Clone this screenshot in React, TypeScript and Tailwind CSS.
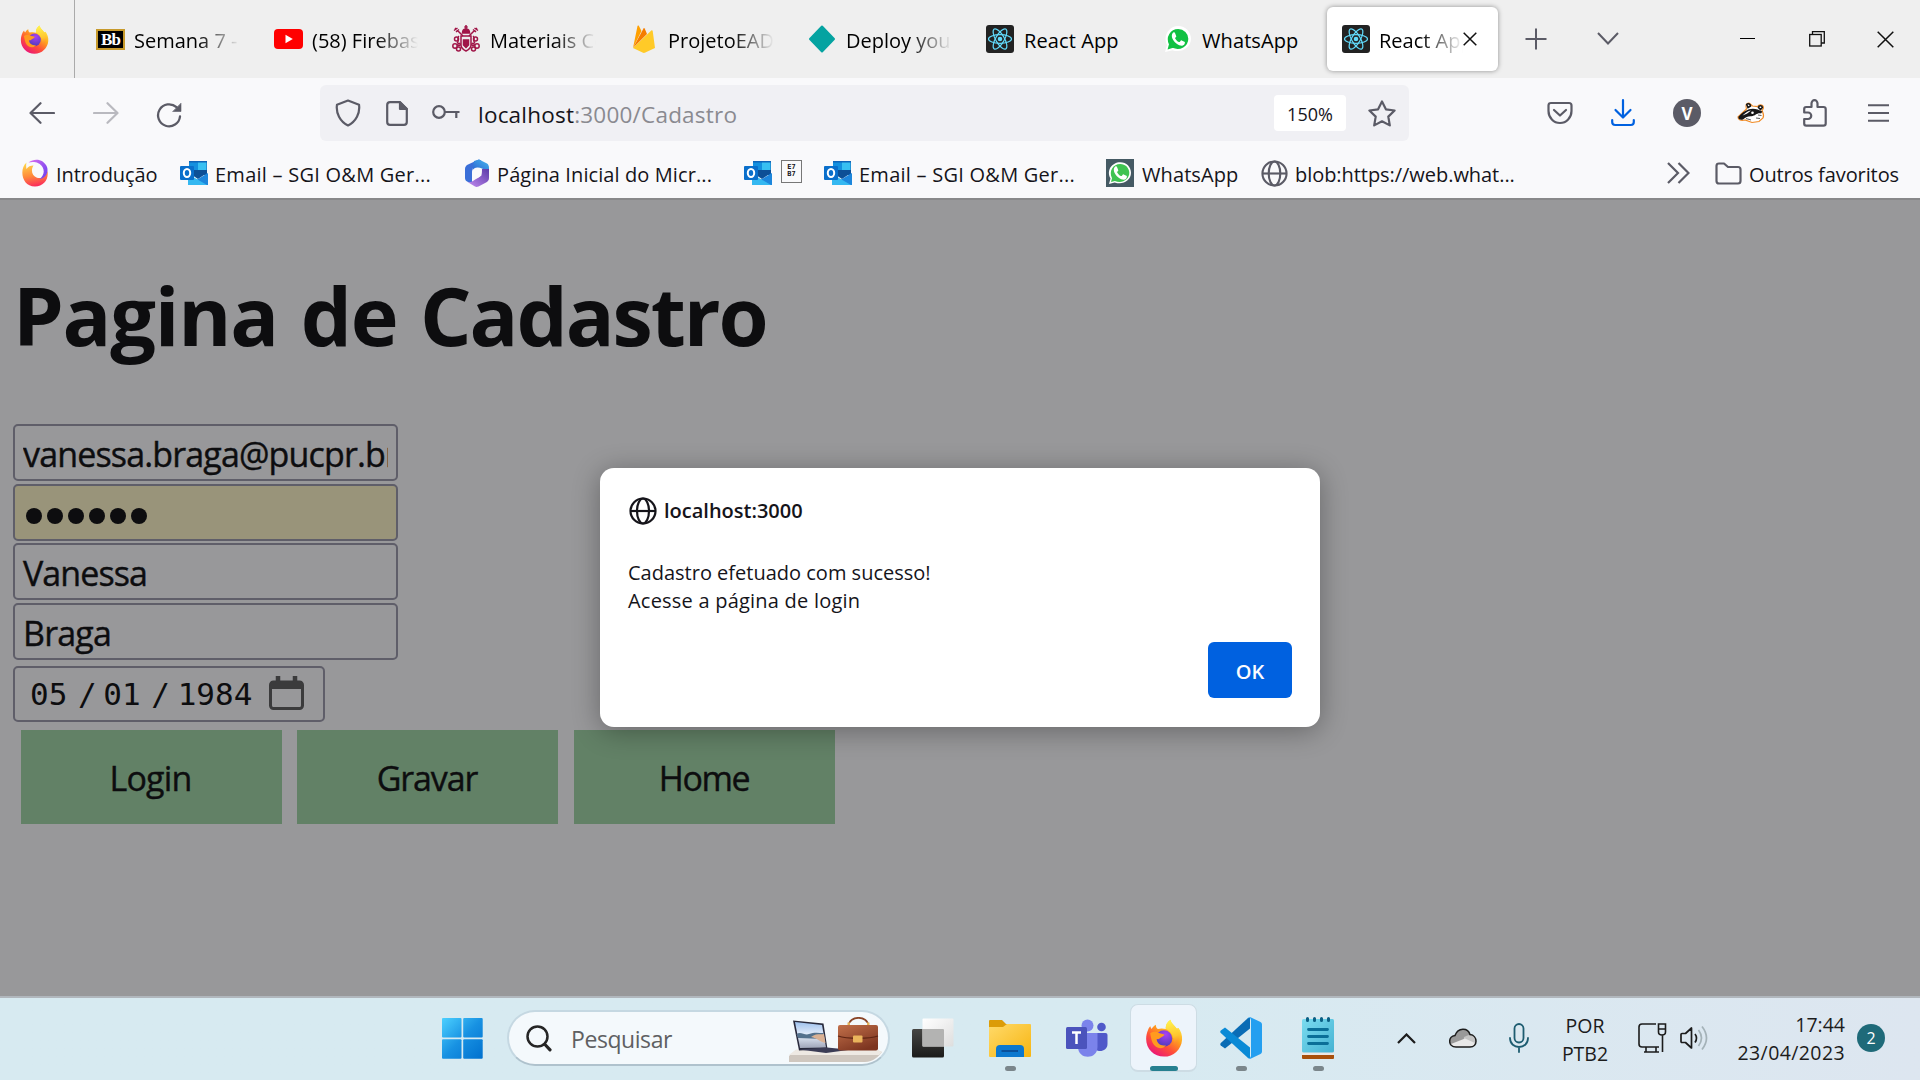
import React from "react";

type IconProps = { className?: string };

function FirefoxIcon({ className }: IconProps) {
  return (
    <svg viewBox="0 0 40 40" className={className}>
      <defs>
        <linearGradient id="fxBody" x1="0.85" y1="0.1" x2="0.25" y2="1">
          <stop offset="0" stopColor="#fff14a" />
          <stop offset="0.35" stopColor="#ffa21c" />
          <stop offset="0.65" stopColor="#ff4f38" />
          <stop offset="1" stopColor="#e9127c" />
        </linearGradient>
        <radialGradient id="fxGlobe" cx="0.6" cy="0.25" r="0.8">
          <stop offset="0" stopColor="#a940f5" />
          <stop offset="1" stopColor="#4a3bb5" />
        </radialGradient>
        <linearGradient id="fxTail" x1="0.5" y1="0" x2="0.6" y2="1">
          <stop offset="0" stopColor="#fff44f" />
          <stop offset="0.6" stopColor="#ffc52e" />
          <stop offset="1" stopColor="#ff6a2e" stopOpacity="0.2" />
        </linearGradient>
      </defs>
      <path
        fill="url(#fxBody)"
        d="M3.2 11.5 C4 9 5 8.3 5.600 7.500 C5.800 8.800 6.400 9.700 7 10.400 C8.300 8.300 9.500 7 11.500 6 C11.300 8 12 9.600 13.500 10.500 C17 9.500 20 10 22 10.600 C21.500 6.600 23.500 3 26.800 0.700 C27.500 4.500 31 6.500 33.500 10 C34.600 9.800 35 9.600 35.200 9.300 C37.800 13 39.400 17 39 22 C38.200 32 30 39.600 20 39.600 C9.500 39.600 1.200 31.500 1.200 21 C1.200 17.500 2 14 3.200 11.500 Z"
      />
      <path fill="url(#fxTail)" d="M26.800 0.700 C27.500 4.500 31 6.500 33.500 10.500 C38 18 35 26 30 30 C31.500 21 29 14 22 10.600 C21.500 6.600 23.500 3 26.800 .7 Z" />
      <circle cx="20" cy="20.500" r="8.700" fill="url(#fxGlobe)" />
      <path fill="#ff9a1f" d="M5.500 15 C9 12.800 12.500 13.300 14.500 14.800 C16.500 15.600 18.500 15.800 20.500 16.200 C20 18.300 16.500 18.700 15 20.800 C14.500 21.500 13 21.300 12.300 21.100 C12.700 26 17 28.800 22 27.500 C19 32.500 11 31.500 8 25 C6.500 21.500 6 18 5.500 15 Z" />
    </svg>
  );
}

function BlackboardIcon() {
  return (
    <span className="flex h-[21px] w-[29px] items-center justify-center border-2 border-[#c79a2c] bg-black font-['Liberation_Serif',serif] text-[17px] leading-none font-bold tracking-[-1px] text-white">
      Bb
    </span>
  );
}

function YoutubeIcon() {
  return (
    <svg viewBox="0 0 29 20" className="h-5 w-[29px]">
      <rect width="29" height="20" rx="4" fill="#f00" />
      <path d="M11.500 5.700 L18.800 10 L11.500 14.300 Z" fill="#fff" />
    </svg>
  );
}

function CrestIcon() {
  return (
    <svg viewBox="0 0 28 28" className="size-7" fill="none" stroke="#a01648" strokeWidth="1.500">
      <path d="M14 0 V4 M12.300 2 H15.700" />
      <path d="M10.500 8 C10.500 4.500 12 4 14 4 C16 4 17.500 4.500 17.500 8 Z" fill="#a01648" />
      <path d="M3 3 L11 11 M25 3 L17 11 M2 5.500 L5.500 3 M26 5.500 L22.500 3 M4 7 L7 4.500 M24 7 L21 4.500" />
      <path d="M9 11 H19 V20 C19 23.500 16 25 14 26 C12 25 9 23.500 9 20 Z" />
      <path d="M11.500 15 H16.500 V20 L14 22.500 L11.500 20 Z" fill="#a01648" />
      <circle cx="4.500" cy="14" r="2" />
      <circle cx="23.500" cy="14" r="2" />
      <path d="M7 11 C4 13 8 16 5 18 M21 11 C24 13 20 16 23 18" />
      <circle cx="3" cy="21" r="2.200" />
      <circle cx="6.500" cy="24" r="2" />
      <circle cx="25" cy="21" r="2.200" />
      <circle cx="21.500" cy="24" r="2" />
      <circle cx="7" cy="19.500" r="1.200" />
      <circle cx="21" cy="19.500" r="1.200" />
    </svg>
  );
}

function FirebaseIcon() {
  return (
    <svg viewBox="0 0 22 28" className="ml-[3px] h-7 w-[22px]">
      <path d="M0 23 L4.500 1 C4.600 .3 5.400 .2 5.800 .8 L8.500 6 Z" fill="#ffa000" />
      <path d="M0 23 L10.500 3.500 C10.800 3 11.400 3 11.700 3.500 L14 9 Z" fill="#f57c00" />
      <path d="M0 23 L18.300 5.600 C18.800 5.100 19.600 5.300 19.700 6 L22 23 L12.300 27.600 C11.400 28.100 10.400 28.100 9.500 27.600 Z" fill="#ffca28" />
    </svg>
  );
}

function DeployIcon() {
  return (
    <svg viewBox="0 0 28 28" className="size-7">
      <path d="M14 1.500 L26 14 L14 26.500 L2 14 Z" fill="#05a3a1" stroke="#05a3a1" strokeWidth="2" strokeLinejoin="round" />
    </svg>
  );
}

function ReactIcon() {
  return (
    <svg viewBox="0 0 28 28" className="size-7">
      <rect width="28" height="28" rx="3" fill="#222" />
      <g fill="none" stroke="#61dafb" strokeWidth="1.200">
        <ellipse cx="14" cy="14" rx="11.500" ry="4.300" />
        <ellipse cx="14" cy="14" rx="11.500" ry="4.300" transform="rotate(60 14 14)" />
        <ellipse cx="14" cy="14" rx="11.500" ry="4.300" transform="rotate(120 14 14)" />
      </g>
      <circle cx="14" cy="14" r="2.300" fill="#61dafb" />
    </svg>
  );
}

const HANDSET =
  "M9.800 7.200 C9.200 7.200 7.800 8.600 7.800 11 C7.800 13.800 10 16.500 12.400 18.500 C14.500 20.200 16.700 20.900 18.200 20.700 C19.700 20.400 20.800 19 20.900 17.700 C20.900 17.200 20.800 17 20.400 16.800 L17.600 15.400 C17.200 15.200 17 15.300 16.700 15.700 L15.700 16.900 C15.500 17.100 15.300 17.200 14.900 17 C13.200 16.200 12 14.900 11.200 13.400 C11 13.100 11.100 12.900 11.300 12.700 L12.200 11.700 C12.300 11.500 12.300 11.200 12.200 10.900 L11 7.900 C10.800 7.400 10.600 7.200 9.800 7.200 Z";

function WhatsIcon({ boxed }: { boxed?: boolean }) {
  return (
    <svg viewBox="0 0 28 28" className="size-7 shrink-0">
      {boxed && <rect width="28" height="28" fill="#455a64" />}
      <path
        d={boxed ? "M3 25 L4.500 19.500 C0 11.500 6 3.300 14.200 3.300 C20.500 3.300 25 8 25 13.800 C25 21.700 16.500 26.500 8.700 23.400 Z" : "M1 27 L3 20 C-1.500 11 5 1 14.200 1 C21.500 1 27 7 27 13.800 C27 22.500 17.500 28.500 8.500 25.200 Z"}
        fill="#fff"
      />
      <path d="M5 23 L6 19.300 C2.500 12 7.200 5 14.200 5 C19.400 5 23.300 9 23.300 13.800 C23.300 20.500 16 25 8.900 21.900 Z" fill={boxed ? "#3fc351" : "#12c143"} stroke={boxed ? "none" : "#12c143"} strokeWidth="2" />
      <path d={HANDSET} fill="#fff" />
    </svg>
  );
}

function OutlookIcon() {
  return (
    <svg viewBox="0 0 28 24" className="h-6 w-7 shrink-0">
      <rect x="9" width="18" height="14" fill="#0f64b8" />
      <rect x="9" y="1.500" width="9" height="8" fill="#1490df" />
      <rect x="18" y="1.500" width="8.500" height="8" fill="#38c0f2" />
      <path d="M9 9 H27 V12 L18 18 L9 12 Z" fill="#0d4f96" />
      <path d="M28 12 V24 H8 Z" fill="#1d86dc" />
      <path d="M8 13 L27 24 H8 Z" fill="#35b8f1" />
      <rect y="5" width="14" height="14" rx="1" fill="#0a6fcb" />
      <ellipse cx="7" cy="12" rx="3.200" ry="3.900" fill="none" stroke="#fff" strokeWidth="2" />
    </svg>
  );
}

function IntroIcon() {
  return (
    <svg viewBox="0 0 28 28" className="size-7 shrink-0">
      <defs>
        <linearGradient id="inA" x1="0.3" y1="0" x2="0.5" y2="1">
          <stop offset="0" stopColor="#ffd84a" />
          <stop offset="0.55" stopColor="#ff8a3a" />
          <stop offset="1" stopColor="#fb2a5c" />
        </linearGradient>
        <linearGradient id="inB" x1="0" y1="0" x2="1" y2="0.6">
          <stop offset="0" stopColor="#e070ee" />
          <stop offset="1" stopColor="#7a45f0" />
        </linearGradient>
      </defs>
      <path d="M5.500 3.500 C-2 10 .5 27.500 14 27.500 C22.500 27.500 28 20.500 26.500 12 C25 17.500 20 20.500 15.500 18.500 C11 16.500 9.500 11 12.500 6.500 C9.500 6.500 7 7.500 5.500 10 C5 7.500 5 5.500 5.500 3.500 Z" fill="url(#inA)" />
      <path d="M7.500 3.500 C14 -1.500 23 .5 26 8 C28 14 24 19.500 18.500 20 C22.500 17 24 12.500 21.500 8 C18.500 3 12.500 2.300 7.500 3.500 Z" fill="url(#inB)" />
    </svg>
  );
}

function Ms365Icon() {
  return (
    <svg viewBox="0 0 26 28" className="h-7 w-[26px] shrink-0">
      <defs>
        <linearGradient id="msA" x1="0" y1="1" x2="1" y2="0">
          <stop offset="0" stopColor="#2b5fd0" />
          <stop offset="1" stopColor="#43b6ee" />
        </linearGradient>
        <linearGradient id="msB" x1="0" y1="1" x2="1" y2="0">
          <stop offset="0" stopColor="#c18af0" />
          <stop offset="1" stopColor="#5b3aa8" />
        </linearGradient>
      </defs>
      <path d="M15 .5 L4 5.500 C2 6.500 1 8 1 10 V19 C1 21 2 22 4 23 L8 24.500 V12 C8 9 10 8 13 8 L21 8 L17 1.500 Z" fill="#3a6fd8" />
      <path d="M10 2 L15 .5 L23 4.500 C24.500 5.500 25 7 25 9 V13 L18 9.500 C14 7.500 9 8 8 13 Z" fill="url(#msA)" />
      <path d="M25 10 V19 C25 21 24 22.500 22.500 23.300 L14.500 27.500 C13 28 12 28 11 27.500 L3.500 23 C8 24 10 21 13 19.500 C17 18 18 15 18 10 Z" fill="url(#msB)" />
      <path d="M13 9 L17.500 11.500 V16.500 L13 19 L8.500 16.500 V11.500 Z" fill="#f9f9fb" />
    </svg>
  );
}

function GlobeIcon({ className }: IconProps) {
  return (
    <svg viewBox="0 0 28 28" className={className} fill="none" stroke="currentColor" strokeWidth="2.200">
      <circle cx="14" cy="14" r="12.500" />
      <ellipse cx="14" cy="14" rx="6" ry="12.500" />
      <path d="M1.500 14 H26.500" />
    </svg>
  );
}

function BadgerIcon() {
  return (
    <svg viewBox="0 0 28 22" className="h-[22px] w-7">
      <path d="M1 15 L9.500 7 C8 3 9.500 .8 12.500 1.300 L15.500 4 L20.500 4.500 C22.500 1.800 27 3 26.300 6.500 L25 8.500 C26 11 27.500 13 26 16 L22 19.500 L15 20.500 L8 18 C4 19 1 18 1 15 Z" fill="#fff" stroke="#f08a24" strokeWidth="1.200" />
      <path d="M1.300 15 C4.500 11 8.500 8.500 12 7.300 C17 5.800 21 7.500 25.500 9.500 L24 11.500 C20 10.500 18.500 14 14.500 14.200 C11 14 9 15 6 17.500 C3.500 18.300 1.300 17.500 1.300 15 Z" fill="#161616" />
      <path d="M5.500 13.500 C9 10.500 11 9 14 8.500 C11.500 10.500 9 12.500 5.500 13.500 Z" fill="#fff" />
      <path d="M9.700 2.500 C11 1 13.500 2 13.500 4 L11 5.500 Z M21.500 5.500 C22 3 25.300 3.300 25.300 5.500 L23.500 7.500 Z" fill="none" stroke="#161616" strokeWidth="1.600" />
      <circle cx="15.500" cy="10.800" r="1.300" fill="#fff" />
      <path d="M9 16.500 L14 18 M21 13 L24.500 13.500 M19 16 L23 16.500" stroke="#444" strokeWidth="0.900" />
    </svg>
  );
}

function SearchArt() {
  return (
    <svg viewBox="0 0 94 46" className="h-[46px] w-[94px]">
      <defs>
        <linearGradient id="arBag" x1="0" y1="0" x2="0.6" y2="1">
          <stop offset="0" stopColor="#c2704a" />
          <stop offset="1" stopColor="#7d3520" />
        </linearGradient>
        <linearGradient id="arSky" x1="0" y1="0" x2="0" y2="1">
          <stop offset="0" stopColor="#9fc2ee" />
          <stop offset="0.500" stopColor="#e6eefa" />
          <stop offset="1" stopColor="#9fa5b8" />
        </linearGradient>
      </defs>
      <path d="M0 39 L7 33 H88 L93 35 C90 39 84 45 76 45 H0 Z" fill="#cfc7bf" />
      <path d="M0 38 L7 32.500 H88 L93 35 L90 38 Z" fill="#eee9e3" />
      <path d="M4 3.500 L34.500 6.500 L38.500 32 L10 33.500 Z" fill="#27283a" />
      <path d="M6 5 L33 8 L37 30.500 L11 31 Z" fill="url(#arSky)" />
      <path d="M7.500 17 C12 14 16 19 20 17 C25 15 30 16 34.500 16 L35.500 22 L9 21 Z" fill="#54718c" />
      <path d="M22 20 C27 16 32 18 35 17 L36.500 26 C31 25 28 21 22 20 Z" fill="#d9b194" />
      <path d="M10 32.500 L38 30.500 L61 32.800 L37 36 Z" fill="#3b3c55" />
      <path d="M60 8 C60 -1.500 79 -1.500 79 8" fill="none" stroke="#8a4528" strokeWidth="1.800" />
      <rect x="58.500" y="5.500" width="2.500" height="3.500" fill="#e5b35a" />
      <rect x="78" y="5.500" width="2.500" height="3.500" fill="#e5b35a" />
      <rect x="49" y="8" width="40" height="25.500" rx="2" fill="url(#arBag)" />
      <path d="M49 19 C58 22 80 22 89 19" fill="none" stroke="#5d2413" strokeWidth="1.300" />
      <rect x="64" y="18.500" width="9.500" height="7" rx="1" fill="#eab45c" />
    </svg>
  );
}

function TaskViewIcon() {
  return (
    <svg viewBox="0 0 42 40" className="h-10 w-[42px]">
      <defs>
        <linearGradient id="tvA" x1="0" y1="0" x2="0" y2="1">
          <stop offset="0" stopColor="#464644" />
          <stop offset="1" stopColor="#1b1b1a" />
        </linearGradient>
        <linearGradient id="tvB" x1="0" y1="0" x2="1" y2="1">
          <stop offset="0" stopColor="#fff" />
          <stop offset="1" stopColor="#dedede" />
        </linearGradient>
      </defs>
      <rect y="11" width="32" height="28.500" rx="1.500" fill="url(#tvA)" />
      <rect x="10.500" y="0.500" width="31" height="28" rx="1" fill="url(#tvB)" />
      <path d="M10.500 11 H31 Q32 11 32 12 V28.500 H10.500 Z" fill="#b3b3b2" />
    </svg>
  );
}

function ExplorerIcon() {
  return (
    <svg viewBox="0 0 42 37" className="h-[37px] w-[42px]">
      <defs>
        <linearGradient id="exA" x1="0" y1="0" x2="1" y2="1">
          <stop offset="0" stopColor="#ffda6a" />
          <stop offset="1" stopColor="#f7b511" />
        </linearGradient>
      </defs>
      <path d="M0 1 Q0 0 1 0 H13 L17 4 H40 V9 H0 Z" fill="#dc9c08" />
      <path d="M0 7 H14 L18 4 H41 Q42 4 42 5 V36 Q42 37 41 37 H1 Q0 37 0 36 Z" fill="url(#exA)" />
      <path d="M7 37 V29 Q7 25 11 25 H31 Q35 25 35 29 V37 Z" fill="#0c78cf" />
      <path d="M12.500 31 H29" stroke="#0a4c96" strokeWidth="1.800" />
    </svg>
  );
}

function TeamsIcon() {
  return (
    <svg viewBox="0 0 42 38" className="h-[38px] w-[42px]">
      <circle cx="21.500" cy="6.500" r="6" fill="#7b83eb" />
      <circle cx="35.500" cy="8" r="4.300" fill="#5059c9" />
      <path d="M28 14 H39.500 Q41.500 14 41.500 16 V25 C41.500 34 28 34 28 27 Z" fill="#5059c9" />
      <path d="M12 14 H31.500 V28 C31.500 41 12 41 12 28 Z" fill="#7b83eb" />
      <rect y="8" width="21" height="22" rx="1.500" fill="#4b53bc" />
      <path d="M6 13.500 H15 M10.500 13.500 V25" stroke="#fff" strokeWidth="2.500" />
    </svg>
  );
}

function VscodeIcon() {
  return (
    <svg viewBox="0 0 42 42" className="size-[42px]">
      <path d="M30 1 V11.500 L5 31.500 L.8 28.500 Q-.3 27.300 .8 26 L28 1 Z" fill="#0a6cb5" />
      <path d="M30 41 V30.500 L5 10.500 L.8 13.500 Q-.3 14.700 .8 16 L28 41 Z" fill="#0a8ad6" />
      <path d="M30.500 .3 L40.500 5 Q42 5.800 42 7.500 V34.500 Q42 36.200 40.500 37 L30.500 41.700 Q28.500 42 27.500 40.500 Q31 42 31 38.500 V3.500 Q31 0 27.500 1.500 Q28.500 0 30.500 .3 Z" fill="#249ff0" />
    </svg>
  );
}

function NotepadIcon() {
  return (
    <svg viewBox="0 0 32 42" className="h-[42px] w-8">
      <defs>
        <linearGradient id="npA" x1="0" y1="0" x2="1" y2="1">
          <stop offset="0" stopColor="#7bdcf0" />
          <stop offset="1" stopColor="#45b2d2" />
        </linearGradient>
      </defs>
      <rect y="37" width="32" height="5" rx="1" fill="#a8500c" />
      <rect y="34" width="32" height="4" fill="#ece8e6" />
      <rect y="2" width="32" height="33.500" rx="1.500" fill="url(#npA)" />
      <path d="M5.500 1.500 V3.500 M12.500 1.500 V3.500 M19.500 1.500 V3.500 M26.500 1.500 V3.500" stroke="#0b5f84" strokeWidth="3" strokeLinecap="round" />
      <path d="M6.500 12.500 H25.500 M6.500 19.500 H25.500 M6.500 26.500 H25.500" stroke="#0b6f98" strokeWidth="2.800" strokeLinecap="round" />
    </svg>
  );
}

function Tab({ icon, label, fade }: { icon: React.ReactNode; label: string; fade?: boolean }) {
  return (
    <div className="flex h-full w-[178px] shrink-0 items-center pl-[15px]">
      <span className="flex w-[29px] shrink-0 items-center">{icon}</span>
      <span
        className={
          fade
            ? "ml-[9px] w-[106px] overflow-hidden pt-[3px] leading-8 whitespace-nowrap [mask-image:linear-gradient(to_right,black_60%,transparent_100%)]"
            : "ml-[9px] w-[106px] pt-[3px] leading-8 tracking-[0.1px] whitespace-nowrap"
        }
      >
        {label}
      </span>
    </div>
  );
}

function TabBar() {
  return (
    <div className="flex h-[78px] items-center bg-[#efefef] text-black">
      <div className="flex h-full w-[75px] items-center border-r border-[#aaa] pl-[20px]">
        <FirefoxIcon className="size-[29px]" />
      </div>
      <div className="flex h-full pl-[6px]">
        <Tab icon={<BlackboardIcon />} label="Semana 7 - " fade />
        <Tab icon={<YoutubeIcon />} label="(58) Firebase" fade />
        <Tab icon={<CrestIcon />} label="Materiais Co" fade />
        <Tab icon={<FirebaseIcon />} label="ProjetoEAD" fade />
        <Tab icon={<DeployIcon />} label="Deploy your" fade />
        <Tab icon={<ReactIcon />} label="React App" />
        <Tab icon={<WhatsIcon />} label="WhatsApp" />
      </div>
      <div className="flex h-16 w-[171px] shrink-0 items-center rounded-md bg-white pl-[15px] shadow-[0_0_5px_rgba(0,0,0,0.4)]">
        <ReactIcon />
        <span className="ml-[9px] w-[84px] overflow-hidden pt-[3px] leading-8 whitespace-nowrap [mask-image:linear-gradient(to_right,black_50%,transparent_100%)]">
          React App
        </span>
        <svg viewBox="0 0 14 14" className="size-[14px]" stroke="#111" strokeWidth="1.500">
          <path d="M.7 .7 L13.300 13.300 M13.300 .7 L.7 13.300" />
        </svg>
      </div>
      <svg viewBox="0 0 22 22" className="ml-[27px] size-[22px]" stroke="#5b5b66" strokeWidth="2">
        <path d="M11 .5 V21.500 M.5 11 H21.500" />
      </svg>
      <svg viewBox="0 0 22 13" className="mb-[2px] ml-[50px] h-[13px] w-[22px]" fill="none" stroke="#5b5b66" strokeWidth="2">
        <path d="M1 1 L11 11.500 L21 1" />
      </svg>
      <div className="mr-[26px] ml-auto flex items-center">
        <span className="mb-[2px] h-px w-[15px] bg-black" />
        <svg viewBox="0 0 16 16" className="ml-[54px] size-4" fill="none" stroke="#111" strokeWidth="1.300">
          <rect x=".7" y="3.500" width="11.500" height="11.500" />
          <path d="M3.500 3.500 V.7 H15.300 V12 H12.200" />
        </svg>
        <svg viewBox="0 0 17 17" className="ml-[52px] size-[17px]" stroke="#111" strokeWidth="1.500">
          <path d="M.7 .7 L16.300 16.300 M16.300 .7 L.7 16.300" />
        </svg>
      </div>
    </div>
  );
}

function Toolbar() {
  return (
    <div className="flex h-[70px] items-center text-[#5b5b66]">
      <svg viewBox="0 0 26 22" className="ml-[29px] h-[22px] w-[26px]" fill="none" stroke="currentColor" strokeWidth="2.200" strokeLinecap="round" strokeLinejoin="round">
        <path d="M25 11 H2 M11.500 1.200 L1.500 11 L11.500 20.800" />
      </svg>
      <svg viewBox="0 0 26 22" className="ml-[38px] h-[22px] w-[26px] opacity-40" fill="none" stroke="currentColor" strokeWidth="2.200" strokeLinecap="round" strokeLinejoin="round">
        <path d="M1 11 H24 M14.500 1.200 L24.500 11 L14.500 20.800" />
      </svg>
      <svg viewBox="0 0 26 26" className="mt-1 ml-[37px] size-[26px]" fill="none" stroke="currentColor" strokeWidth="2.300" strokeLinecap="round">
        <path d="M24 14.500 A11 11 0 1 1 20.500 5.200" />
        <path d="M25 1.500 V9.500 H17 Z" fill="currentColor" strokeWidth="0.600" />
      </svg>
      <div className="ml-[138px] flex h-14 w-[1089px] items-center rounded-md bg-[#f0f0f4] pl-[15px]">
        <svg viewBox="0 0 26 28" className="h-7 w-[26px]" fill="none" stroke="currentColor" strokeWidth="2.200" strokeLinejoin="round">
          <path d="M13 1.500 L24 5.700 C25.300 14 21 22.500 13 26.500 C5 22.500 .7 14 2 5.700 Z" />
        </svg>
        <svg viewBox="0 0 22 25" className="ml-[25px] h-[25px] w-[22px]" fill="none" stroke="currentColor" strokeWidth="2.200" strokeLinejoin="round">
          <path d="M14 1.200 H4 Q1.200 1.200 1.200 4 V21 Q1.200 23.800 4 23.800 H18 Q20.800 23.800 20.800 21 V8 Z" />
          <path d="M14 1.200 V8 H20.800 Z" fill="currentColor" />
        </svg>
        <svg viewBox="0 0 28 14" className="mb-[3px] ml-[24px] h-[14px] w-7" fill="none" stroke="currentColor" strokeWidth="2.200">
          <circle cx="7" cy="7" r="5.800" />
          <path d="M13 7 H27.500 M24.300 7 V13" />
        </svg>
        <span className="ml-[18px] pt-[3px] text-[22.5px] leading-8 tracking-[0.21px] text-[#8a8a90]">
          <span className="text-[#15141a]">localhost</span>:3000/Cadastro
        </span>
        <span className="ml-auto flex h-9 w-[72px] items-center justify-center rounded bg-white pt-[2px] text-[18px] text-[#15141a]">150%</span>
        <svg viewBox="0 0 28 27" className="mr-[13px] ml-[22px] h-[27px] w-7" fill="none" stroke="currentColor" strokeWidth="2.200" strokeLinejoin="round">
          <path d="M14 1.500 L17.900 9.300 L26.600 10.500 L20.300 16.600 L21.800 25.400 L14 21.300 L6.200 25.400 L7.700 16.600 L1.400 10.500 L10.100 9.300 Z" />
        </svg>
      </div>
      <svg viewBox="0 0 26 24" className="ml-[138px] h-6 w-[26px]" fill="none" stroke="currentColor" strokeWidth="2.200" strokeLinecap="round" strokeLinejoin="round">
        <path d="M4 2 H22 Q24.500 2 24.500 4.500 V10 A11.500 12 0 0 1 1.500 10 V4.500 Q1.500 2 4 2 Z M7 9 L13 14.500 L19 9" />
      </svg>
      <svg viewBox="0 0 24 28" className="ml-[38px] h-7 w-6" fill="none" stroke="#0061e0" strokeWidth="2.200" strokeLinecap="round" strokeLinejoin="round">
        <path d="M12 1.200 V18 M4.500 11 L12 18.500 L19.500 11 M1.200 21 V23 Q1.200 26 4.200 26 H19.800 Q22.800 26 22.800 23 V21" />
      </svg>
      <span className="ml-[38px] flex size-7 items-center justify-center rounded-full bg-[#5b5b66] text-[17px] leading-none font-bold text-white">V</span>
      <span className="ml-[36px]"><BadgerIcon /></span>
      <svg viewBox="0 0 24 28" className="ml-[38px] h-7 w-6" fill="none" stroke="currentColor" strokeWidth="2.200" strokeLinejoin="round">
        <path d="M1.200 13.500 V10 Q1.200 8 3.200 8 H8.500 V4.500 A3 3.300 0 0 1 14.500 4.500 V8 H20.500 Q22.700 8 22.700 10 V24.500 Q22.700 26.700 20.500 26.700 H3.200 Q1.200 26.700 1.200 24.500 V20 H5 A3.200 3.200 0 0 0 5 13.500 Z" />
      </svg>
      <svg viewBox="0 0 21 18" className="ml-[41px] h-[18px] w-[21px]" stroke="currentColor" strokeWidth="2">
        <path d="M0 1.200 H21 M0 9 H21 M0 16.800 H21" />
      </svg>
    </div>
  );
}

function Bookmarks() {
  return (
    <div className="flex h-[50px] items-center text-[#15141a] [&>span]:shrink-0 [&>span]:pt-[3px] [&>span]:leading-8 [&>span]:whitespace-nowrap">
      <div className="ml-[21px]"><IntroIcon /></div>
      <span className="ml-[7px] w-[124px] tracking-[-0.1px]">Introdução</span>
      <OutlookIcon />
      <span className="ml-[7px] w-[249px] tracking-[0.25px]">Email – SGI O&M Ger...</span>
      <Ms365Icon />
      <span className="ml-[7px] w-[247px] tracking-[0.1px]">Página Inicial do Micr...</span>
      <OutlookIcon />
      <div className="mb-[4px] ml-[9px] flex h-[23px] w-[21px] flex-col items-center justify-center border border-[#777] font-['DejaVu_Sans_Mono',monospace] text-[7px] leading-[7px] font-bold">
        <div>E7</div>
        <div>B7</div>
      </div>
      <div className="ml-[22px]"><OutlookIcon /></div>
      <span className="ml-[7px] w-[247px] tracking-[0.25px]">Email – SGI O&M Ger...</span>
      <WhatsIcon boxed />
      <span className="ml-[8px] w-[119px] tracking-[0.1px]">WhatsApp</span>
      <GlobeIcon className="size-[27px] shrink-0 text-[#5b5b66]" />
      <span className="ml-[7px] tracking-[-0.05px]">blob:https://web.what...</span>
      <svg viewBox="0 0 23 22" className="ml-auto h-[22px] w-[23px]" fill="none" stroke="#5b5b66" strokeWidth="2.200">
        <path d="M1 1 L11 11 L1 21 M11.500 1 L21.500 11 L11.500 21" />
      </svg>
      <svg viewBox="0 0 27 23" className="ml-[25px] h-[23px] w-[27px]" fill="none" stroke="#5b5b66" strokeWidth="2.200" strokeLinejoin="round">
        <path d="M1.500 4 Q1.500 1.500 4 1.500 H9 L13 5 H23 Q25.500 5 25.500 7.500 V19 Q25.500 21.500 23 21.500 H4 Q1.500 21.500 1.500 19 Z" />
      </svg>
      <span className="mr-[21px] ml-[7px] tracking-[-0.1px]">Outros favoritos</span>
    </div>
  );
}

function Field({ children, className }: { children?: React.ReactNode; className: string }) {
  return (
    <div className={`flex w-[385px] items-center rounded-[5px] border-2 border-[#5f5e69] pl-[8px] text-[34px] ${className}`}>
      {children}
    </div>
  );
}

function Page() {
  return (
    <div className="h-[798px] border-t-2 border-[#88888a] bg-[#98989a] pl-[13px] text-[#0d0d0f]">
      <h1 className="pt-[67px] text-[81px] leading-[96px] font-bold tracking-[-1.26px] whitespace-nowrap [word-spacing:3px]">
        Pagina de <span className="tracking-[-2.05px]">Cadastro</span>
      </h1>
      <div className="[-webkit-text-stroke:0.4px_#0d0d0f]">
        <Field className="mt-[61px] h-[57px] pt-[3px] tracking-[-0.85px]">
          <span className="w-[365px] overflow-hidden leading-[48px] whitespace-nowrap">vanessa.braga@pucpr.br</span>
        </Field>
        <Field className="mt-[3px] h-[57px] gap-[5px] bg-[#99947a] pt-[7px] pl-[11px]">
          {[0, 1, 2, 3, 4, 5].map((i) => (
            <span key={i} className="size-4 rounded-full bg-[#0d0d0f]" />
          ))}
        </Field>
        <Field className="mt-[2px] h-[57px] pt-[4px] tracking-[-0.9px]">Vanessa</Field>
        <Field className="mt-[3px] h-[57px] pt-[4px] tracking-[-0.8px]">Braga</Field>
      </div>
      <div className="mt-[6px] flex h-14 w-[312px] items-center rounded-[5px] border-2 border-[#5f5e69] pl-[15px] font-['DejaVu_Sans_Mono',monospace] text-[31px]">
        <span>05</span>
        <span className="ml-[4px] w-[32px] text-center">/</span>
        <span>01</span>
        <span className="ml-[4px] w-[32px] text-center">/</span>
        <span className="ml-px">1984</span>
        <svg viewBox="0 0 35 34" className="mb-[2px] ml-[17px] h-[34px] w-[35px]" fill="none" stroke="#3b3b3c" strokeWidth="3">
          <rect x="1.500" y="6" width="32" height="26.500" rx="3" />
          <path d="M2 5 H33 V13 H2 Z" fill="#3b3b3c" stroke="none" />
          <path d="M9 0 V7 M26 0 V7" strokeWidth="4.500" />
        </svg>
      </div>
      <div className="mt-[8px] ml-[8px] flex gap-[15px] text-[34px] [-webkit-text-stroke:0.4px_#0d0d0f] [&>button]:h-[94px] [&>button]:w-[261px] [&>button]:bg-[#628166] [&>button]:pt-[3px]">
        <button className="pr-[2px] tracking-[-0.8px]">Login</button>
        <button className="pr-px tracking-[-1.1px]">Gravar</button>
        <button className="ml-px pr-px tracking-[-1.4px]">Home</button>
      </div>
    </div>
  );
}

function Dialog() {
  return (
    <div className="absolute top-[468px] left-[600px] flex h-[259px] w-[720px] flex-col rounded-[14px] bg-white px-[28px] text-[#15141a] shadow-[0_4px_28px_rgba(0,0,0,0.33)]">
      <div className="mt-[29px] flex h-[28px] items-center pl-px font-semibold">
        <GlobeIcon className="size-[28px]" />
        <span className="ml-[7px]">localhost:3000</span>
      </div>
      <p className="mt-[34px] leading-[28px]">
        Cadastro efetuado com sucesso!
        <br />
        <span className="tracking-[0.22px]">Acesse a página de login</span>
      </p>
      <button className="mt-[27px] h-14 w-[84px] self-end rounded-[6px] bg-[#0061e0] pt-[3px] font-semibold text-[#fbfbfe]">OK</button>
    </div>
  );
}

function TaskItem({ children, className, running }: { children: React.ReactNode; className: string; running?: boolean }) {
  return (
    <div className={`relative flex h-full items-center justify-center pb-[2px] ${className}`}>
      {children}
      {running && <span className="absolute bottom-[9px] h-[5px] w-[11px] rounded-full bg-[#7b868b]" />}
    </div>
  );
}

function Taskbar() {
  return (
    <div className="flex h-[84px] items-center border-t-2 border-[#b1b7bd] bg-gradient-to-r from-[#d7eaf1] from-60% to-[#dde6f0] pl-[442px] text-[#1c1c1c]">
      <svg viewBox="0 0 41 41" className="mb-[2px] size-[41px]">
        <defs>
          <linearGradient id="winG" x1="0" y1="0" x2="41" y2="41" gradientUnits="userSpaceOnUse">
            <stop offset="0" stopColor="#4cd0ff" />
            <stop offset="0.500" stopColor="#1791e2" />
            <stop offset="1" stopColor="#0070ce" />
          </linearGradient>
        </defs>
        <g fill="url(#winG)">
          <rect width="19.500" height="19.500" rx="1" />
          <rect x="21.200" width="19.500" height="19.500" rx="1" />
          <rect y="21.200" width="19.500" height="19.500" rx="1" />
          <rect x="21.200" y="21.200" width="19.500" height="19.500" rx="1" />
        </g>
      </svg>
      <div className="mb-[2px] ml-[24px] flex h-14 w-[383px] items-center overflow-hidden rounded-full border-2 border-b-[#afc2cd] border-[#c5d8e2] bg-[#f4f9fc] pl-[17px]">
        <svg viewBox="0 0 26 27" className="h-[27px] w-[26px]" fill="none" stroke="#262626" strokeLinecap="round">
          <circle cx="11.500" cy="11.500" r="10" strokeWidth="2.500" />
          <path d="M19 19.500 L24 24.800" strokeWidth="3.200" />
        </svg>
        <span className="ml-[19px] pt-[2px] text-[23px] tracking-[-0.43px] text-[#5e6062]">Pesquisar</span>
        <span className="mt-[4px] mr-[5px] ml-auto"><SearchArt /></span>
      </div>
      <TaskItem className="ml-[22px] w-[42px]"><TaskViewIcon /></TaskItem>
      <TaskItem className="ml-[35px] w-[42px]" running><ExplorerIcon /></TaskItem>
      <TaskItem className="ml-[35px] w-[42px]"><TeamsIcon /></TaskItem>
      <div className="relative mb-[2px] ml-[22px] flex h-[68px] w-[67px] items-center justify-center rounded-lg border border-b-2 border-[#cddce4] bg-[#edf4fb]">
        <FirefoxIcon className="size-[38px]" />
        <span className="absolute -bottom-px h-[5px] w-7 rounded-full bg-[#268090]" />
      </div>
      <TaskItem className="ml-[23px] w-[42px]" running><VscodeIcon /></TaskItem>
      <TaskItem className="ml-[35px] w-[42px]" running><NotepadIcon /></TaskItem>
      <svg viewBox="0 0 19 11" className="mb-[2px] ml-[58px] h-[11px] w-[19px]" fill="none" stroke="#1c1c1c" strokeWidth="2.200">
        <path d="M1 10 L9.500 1.500 L18 10" />
      </svg>
      <svg viewBox="0 0 28 20" className="mb-[2px] ml-[33px] h-5 w-7">
        <path d="M7 19 C-1.500 19 -1 8 6 7.500 C9 -1 19 -.5 21 6.500 C29 7.500 29 19 21 19 Z" fill="#999" />
        <path d="M15 9 L21 6.500 C29 7.500 29 19 21 19 H14 Z" fill="#c4c4c4" />
        <path d="M2 16 L16 10.500 L27 15.500 C25.500 18 24 19 21 19 H7 C4.500 19 3 18 2 16 Z" fill="#e9e9e9" />
        <path d="M7 19 C-1.500 19 -1 8 6 7.500 C9 -1 19 -.5 21 6.500 C29 7.500 29 19 21 19 Z" fill="none" stroke="#1c1c1c" strokeWidth="1.500" />
      </svg>
      <svg viewBox="0 0 20 30" className="mb-[2px] ml-[32px] h-[30px] w-5" fill="none" stroke="#1d5c70" strokeWidth="1.800" strokeLinecap="round">
        <rect x="5.500" y="1" width="9" height="18.500" rx="4.500" />
        <path d="M1 15 C1 27 19 27 19 15 M10 24 V29" />
      </svg>
      <div className="ml-[31px] w-[50px] pt-px text-center text-[19.5px] leading-[28px]">POR<br />PTB2</div>
      <svg viewBox="0 0 29 30" className="mb-[2px] ml-[28px] h-[30px] w-[29px]" fill="none" stroke="#1c1c1c" strokeWidth="1.600">
        <path d="M18 1 H4 Q1 1 1 4 V21 Q1 24 4 24 H21 M8 24 V29 M18 24 V29 M6 29 H21" />
        <path d="M20.500 1 H27.500 V9 Q27.500 12 24 12 Q20.500 12 20.500 9 Z M20.500 6 H27.500 M24.500 12 V29" />
      </svg>
      <svg viewBox="0 0 29 26" className="mb-[2px] ml-[13px] h-[26px] w-[29px]" fill="none" stroke="#1c1c1c" strokeWidth="1.700" strokeLinejoin="round">
        <path d="M1 9.500 Q1 8.500 2 8.500 H5.500 L11.500 3 V23 L5.500 17.500 H2 Q1 17.500 1 16.500 Z M15 9 Q18 13 15 17.500" />
        <path d="M18.500 5 Q24.500 13 18.500 21 M22 1.500 Q31 13 22 24.500" stroke="#a4b2b8" />
      </svg>
      <div className="ml-auto text-right text-[19.5px] leading-[28px]">
        <div>17:44</div>
        <div className="tracking-[0.4px]">23/04/2023</div>
      </div>
      <span className="mr-[35px] mb-[2px] ml-[12px] flex size-7 items-center justify-center rounded-full bg-[#1f6a79] text-[16px] leading-none text-white">2</span>
    </div>
  );
}

export default function App() {
  return (
    <div className="relative h-[1080px] w-[1920px] overflow-hidden bg-[#f9f9fb] font-['Open_Sans','Noto_Sans',sans-serif] text-[20px]">
      <TabBar />
      <Toolbar />
      <Bookmarks />
      <Page />
      <Taskbar />
      <Dialog />
    </div>
  );
}
